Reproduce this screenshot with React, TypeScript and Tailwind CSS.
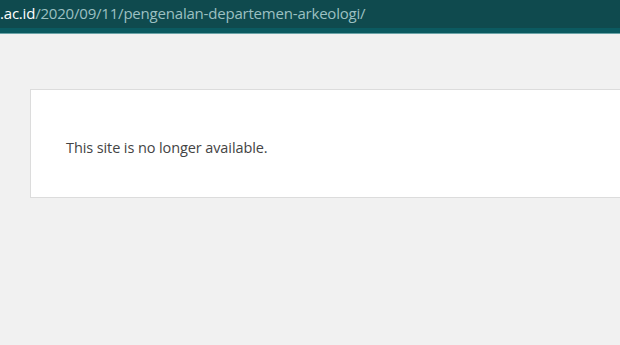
import React from "react";

const App: React.FC = () => {
  return (
    <div className="min-h-[345px] w-[620px] overflow-hidden bg-[#f1f1f1] font-['Open_Sans',sans-serif]">
      {/* Address bar */}
      <div className="h-[28px] bg-[#0f4a4e] flex items-center whitespace-nowrap text-[15px] leading-none tracking-[-0.2px] pb-[2px]">
        <span className="text-white">.ac.id</span>
        <span className="text-[#9cc0c2]">/2020/09/11/pengenalan-departemen-arkeologi/</span>
      </div>
      <div className="h-[5px] bg-[#0b5a60]" />
      <div className="h-[1px] bg-[#6aa3a7]" />

      {/* Message card */}
      <div className="pt-[55px] pl-[30px]">
        <div className="h-[109px] w-[620px] bg-white border border-[#dcdcdc] flex items-center pl-[35px] pt-[8px]">
          <p className="text-[14.5px] text-[#444] tracking-[-0.1px]">This site is no longer available.</p>
        </div>
      </div>
    </div>
  );
};

export default App;
